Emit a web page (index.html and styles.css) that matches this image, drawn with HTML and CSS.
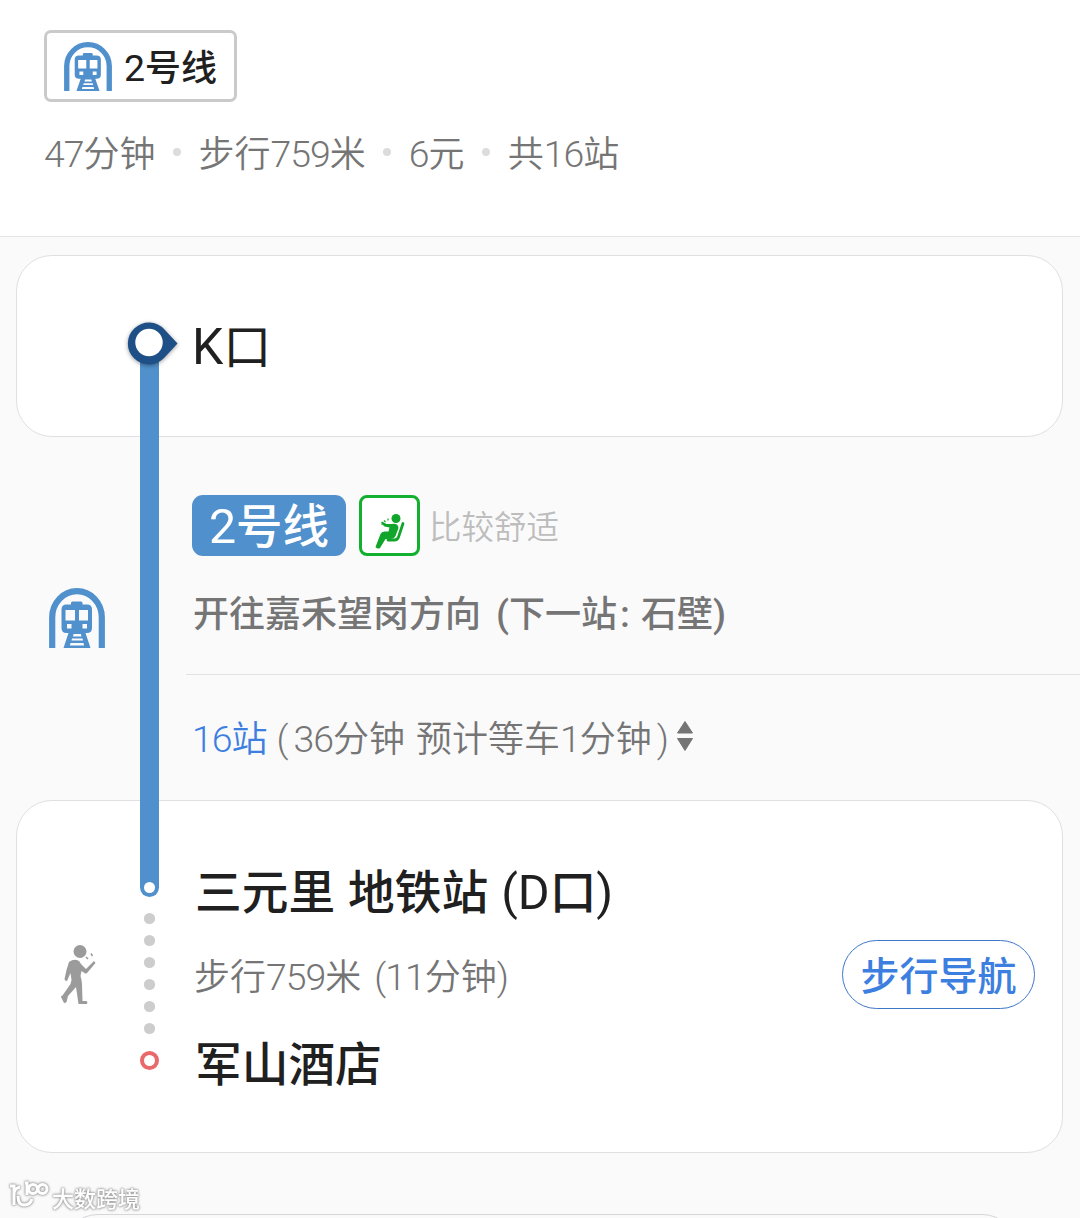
FILE: index.html
```html
<!DOCTYPE html>
<html lang="zh-CN">
<head>
    <meta charset="UTF-8">
    <meta name="viewport" content="width=device-width, initial-scale=1.0">
    <title>2号线</title>
    <link rel="stylesheet" href="styles.css">
</head>
<body>
    <svg class="symbols" width="0" height="0">
        <symbol id="metro" viewBox="0 0 56 60" preserveAspectRatio="none">
            <path d="M3.2 60V29.500A24.800 26.300 0 0 1 52.800 29.500V60" fill="none" stroke="currentColor" stroke-width="6.200"/>
            <path fill="currentColor" fill-rule="evenodd" d="M22 15q0-1.500 1.500-1.500h8.500q1.500 0 1.500 1.500v1.500h4.500q5 0 5 5v18.500q0 5-5 5h-1.500L41.500 60H14.500L19.500 45h-2q-5 0-5-5V21.500q0-5 5-5H22zM16.500 22v10.500h9.500V22zM30 22v10.500h9V22zM18 36v4.500h4.500V36zM33.500 36v4.500h4.500V36zM24.500 46l-.5 2.500h8.500l-.6-2.500zM23 50.500l-.5 2h11.500l-.5-2zM21.500 55l-.6 2.500h14.200l-.6-2.500z"/>
        </symbol>
    </svg>

    <header class="summary">
        <div class="line-chip">
            <svg class="chip-icon"><use href="#metro"/></svg>
            <span><b>2</b>号线</span>
        </div>
        <div class="facts">
            <span><b>47</b>分钟</span>
            <i></i>
            <span>步行<b>759</b>米</span>
            <i></i>
            <span><b>6</b>元</span>
            <i></i>
            <span class="stops">共<b>16</b>站</span>
        </div>
    </header>

    <main class="route">
        <section class="card start">
            <h2><b>K</b>口</h2>
        </section>

        <section class="ride">
            <svg class="ride-icon"><use href="#metro"/></svg>
            <div class="ride-info">
                <div class="badges">
                    <span class="line-badge"><b>2</b>号线</span>
                    <span class="seat">
                        <svg width="61" height="61" viewBox="0 0 61 61">
                            <g fill="#12a52c">
                                <circle cx="37" cy="23.500" r="4.500"/>
                                <path d="M33 29q6-1 6.500 4l-3 8q-1.500 3-5 3h-5l-5.500 9q-2.500 1.500-4.500-1l5-13q1-2.500 4-2.500h4l1-4-5-1-3.500-3.500 1-1.500 4.500 2.500h3z"/>
                            </g>
                            <path d="M44 28.500l-4.500 13.500q-1 3-4 3h-6.500" fill="none" stroke="#12a52c" stroke-width="2.800" stroke-linecap="round"/>
                            <path d="M25 25.500l1.500 1.500M29 23.500v2M22.500 29.500h1" stroke="#12a52c" stroke-width="1.200"/>
                        </svg>
                    </span>
                    <span class="comfort">比较舒适</span>
                </div>
                <p class="direction"><span>开往嘉禾望岗方向</span><span class="next"><b>(</b>下一站<b class="colon">:</b>石壁<b>)</b></span></p>
                <div class="stations">
                    <span class="count"><b>16</b>站</span>
                    <span class="paren"><b>(</b></span>
                    <span class="time"><b>36</b>分钟</span>
                    <span class="wait">预计等车<b>1</b>分钟</span>
                    <span class="paren close"><b>)</b></span>
                    <svg width="18" height="32" viewBox="0 0 18 32" fill="#757575"><path d="M9 1.500L16.500 13h-15zM9 30.500L16.500 18.500h-15z" stroke="#757575" stroke-linejoin="round"/></svg>
                </div>
            </div>
        </section>

        <section class="card end">
            <svg class="walker" width="36" height="64" viewBox="0 0 36 64">
                <g fill="#9b9b9b">
                    <circle cx="20" cy="7.500" r="6.500"/>
                    <path d="M9 18q4-3 8-2 3 1 4 4l5 5 8-8 1.500 2-8.500 10q-1 1-2.500 0l-3-2-1 5q1 3 1.500 8l.5 17h4q1.500 1 .5 3h-8.500L16 43l-8 9-1.500 6q-2 2-3 0L1 53q0-1.500 1.500-1.500L10.500 40l1-4-1-7-3.500 8q-2.500 0-2.500-2l2-9z"/>
                    <path d="M26 13l2 2M31 9.500l1.500 2.500" stroke="#9b9b9b" stroke-width="1.500"/>
                </g>
            </svg>
            <div class="walk">
                <h2><span>三元里</span><span>地铁站</span><span><b>(D</b>口<b>)</b></span></h2>
                <p><span>步行<b>759</b>米</span><span><b>(11</b>分钟<b>)</b></span></p>
                <h2>军山酒店</h2>
            </div>
            <button class="navigate">步行导航</button>
        </section>

        <!-- line drawn across the cards, from entrance to hotel -->
        <svg class="track" width="60" height="770" viewBox="0 0 60 770">
            <path d="M20 30H39V562.500a9.500 9.500 0 0 1-19 0z" fill="#5090cc"/>
            <circle cx="29.500" cy="562.500" r="5.500" fill="#fff"/>
            <path class="pin" d="M44.500 4.500L57.500 18.500 44.500 32.500A21 21 0 1 1 44.500 4.500z" fill="#1f4f87"/>
            <circle cx="29" cy="17.500" r="13.700" fill="#fff"/>
            <g fill="#cdcdcd">
                <circle cx="29.500" cy="593.500" r="5.600"/>
                <circle cx="29.500" cy="615.500" r="5.600"/>
                <circle cx="29.500" cy="637.500" r="5.600"/>
                <circle cx="29.500" cy="659.500" r="5.600"/>
                <circle cx="29.500" cy="681.500" r="5.600"/>
                <circle cx="29.500" cy="703.500" r="5.600"/>
            </g>
            <circle cx="29.500" cy="735.500" r="7.500" fill="#fff" stroke="#e9686b" stroke-width="4"/>
        </svg>
    </main>

    <footer class="bottom">
        <div class="next-card"></div>
        <div class="watermark">
            <svg width="42" height="30" viewBox="0 0 42 30" fill="none" stroke="#fff" stroke-width="3">
                <path d="M2 6h4v19M6 13q1-5 6-6M10 16q0 9 6 9 6 0 8-6M17 3h2v12"/>
                <circle cx="25" cy="9" r="4.500"/>
                <circle cx="34.500" cy="9" r="4.500"/>
            </svg>
            <span>大数跨境</span>
        </div>
    </footer>
</body>
</html>
```

FILE: styles.css
```css
* {
    box-sizing: border-box;
}
body {
    margin: 0;
    background-color: #fafafb;
    font-family: "Noto Sans CJK SC", sans-serif;
    font-size: 36px;
    color: #757575;
}
h2, p {
    margin: 0;
    font-weight: 500;
}
/* latin letters and digits */
b {
    font-family: Roboto, sans-serif;
    font-size: 1.04em;
    font-weight: inherit;
    line-height: 1;
}
.facts b, .stations b, .walk p b {
    letter-spacing: -1px;
}
.line-chip b, .line-badge b, .walk h2 b {
    font-weight: 400;
}
.symbols {
    position: absolute;
}
.summary {
    height: 237px;
    padding: 30px 44px;
    background-color: #fff;
    border-bottom: 1px solid #e4e4e4;
}
.line-chip {
    display: flex;
    align-items: center;
    width: 193px;
    height: 72px;
    padding-left: 17px;
    border: 3px solid #cacaca;
    border-radius: 7px;
    color: #202020;
    font-weight: 500;
    line-height: 66px;
}
.line-chip span {
    margin-top: -3px;
}
.chip-icon {
    width: 48px;
    height: 49px;
    margin-right: 12px;
    color: #5090cc;
}
.facts {
    display: flex;
    align-items: center;
    height: 50px;
    margin-top: 24px;
    font-weight: 350;
}
.facts i {
    width: 8px;
    height: 8px;
    margin: 1px 17.500px 0;
    border-radius: 50%;
    background-color: #dcdcdc;
}
.route {
    position: relative;
    padding: 18px 17px 0 16px;
}
.card {
    border: 1px solid #e0e0e2;
    border-radius: 36px;
    background-color: #fff;
}
.card h2 {
    color: #202020;
    font-size: 46.500px;
    line-height: 60px;
}
.start {
    height: 182px;
    padding: 57px 0 0 175px;
}
.start h2 {
    font-size: 48px;
    font-weight: 400;
}
.ride {
    display: flex;
    height: 363px;
    margin-right: -17px;
}
.ride-icon {
    width: 56px;
    height: 60px;
    margin: 151px 81px 0 33px;
    color: #5090cc;
}
.ride-info {
    flex: 1;
    padding-top: 58px;
}
.badges {
    display: flex;
    padding-left: 6px;
}
.line-badge {
    width: 154px;
    height: 61px;
    border-radius: 11px;
    background-color: #5090cc;
    color: #fff;
    font-size: 46.500px;
    font-weight: 500;
    line-height: 56px;
    text-align: center;
}
.seat {
    width: 61px;
    height: 61px;
    margin: 0 9px 0 13px;
    border: 3px solid #12b02e;
    border-radius: 8px;
    background-color: #fff;
}
.seat svg {
    display: block;
    margin: -3px;
}
.comfort {
    color: #bdbdbd;
    font-size: 32.500px;
    font-weight: 350;
    line-height: 59px;
}
.direction {
    height: 119px;
    padding-left: 7px;
    border-bottom: 1px solid #e2e2e4;
    line-height: 110px;
    white-space: nowrap;
}
.next {
    margin-left: 15px;
}
.colon {
    margin: 0 11px 0 3px;
}
.stations {
    display: flex;
    align-items: center;
    height: 122px;
    padding-left: 6px;
    font-weight: 350;
}
.count {
    color: #3d7fe0;
}
.paren {
    margin: 0 6px 0 9px;
}
.wait {
    margin-left: 11px;
}
.close {
    margin: 0 8px 0 5px;
}
.end {
    display: flex;
    height: 353px;
}
.walker {
    margin: 143px 98px 0 43px;
}
.walk {
    flex: 1;
    padding-top: 58px;
}
.walk h2 {
    padding-left: 1px;
    font-size: 46.700px;
}
.walk h2 span + span {
    margin-left: 13px;
}
.walk p {
    height: 112px;
    font-weight: 350;
    line-height: 110px;
}
.walk p span + span {
    margin-left: 13px;
}
.navigate {
    width: 193px;
    height: 69px;
    margin: 139px 27px 0 0;
    padding: 0 0 4px;
    border: 1px solid #3f77c8;
    border-radius: 35px;
    background-color: #fff;
    color: #3d7fe0;
    font-family: inherit;
    font-size: 39px;
    font-weight: 500;
    line-height: 60px;
}
.track {
    position: absolute;
    left: 120px;
    top: 88px;
    overflow: visible;
}
.pin {
    filter: drop-shadow(0 1px 2px rgba(0, 0, 0, 0.4));
}
.bottom {
    position: relative;
    height: 65px;
    padding: 61px 62px 0;
    overflow: hidden;
}
.next-card {
    height: 80px;
    border: 1px solid #d6d6da;
    border-radius: 36px;
}
.watermark {
    position: absolute;
    left: 8px;
    top: 27px;
    display: flex;
    gap: 2px;
    color: #fff;
    font-size: 22px;
    font-weight: 500;
    line-height: 34px;
    filter: drop-shadow(0 0 1px #999) drop-shadow(0 0 1px #aaa);
}
```
